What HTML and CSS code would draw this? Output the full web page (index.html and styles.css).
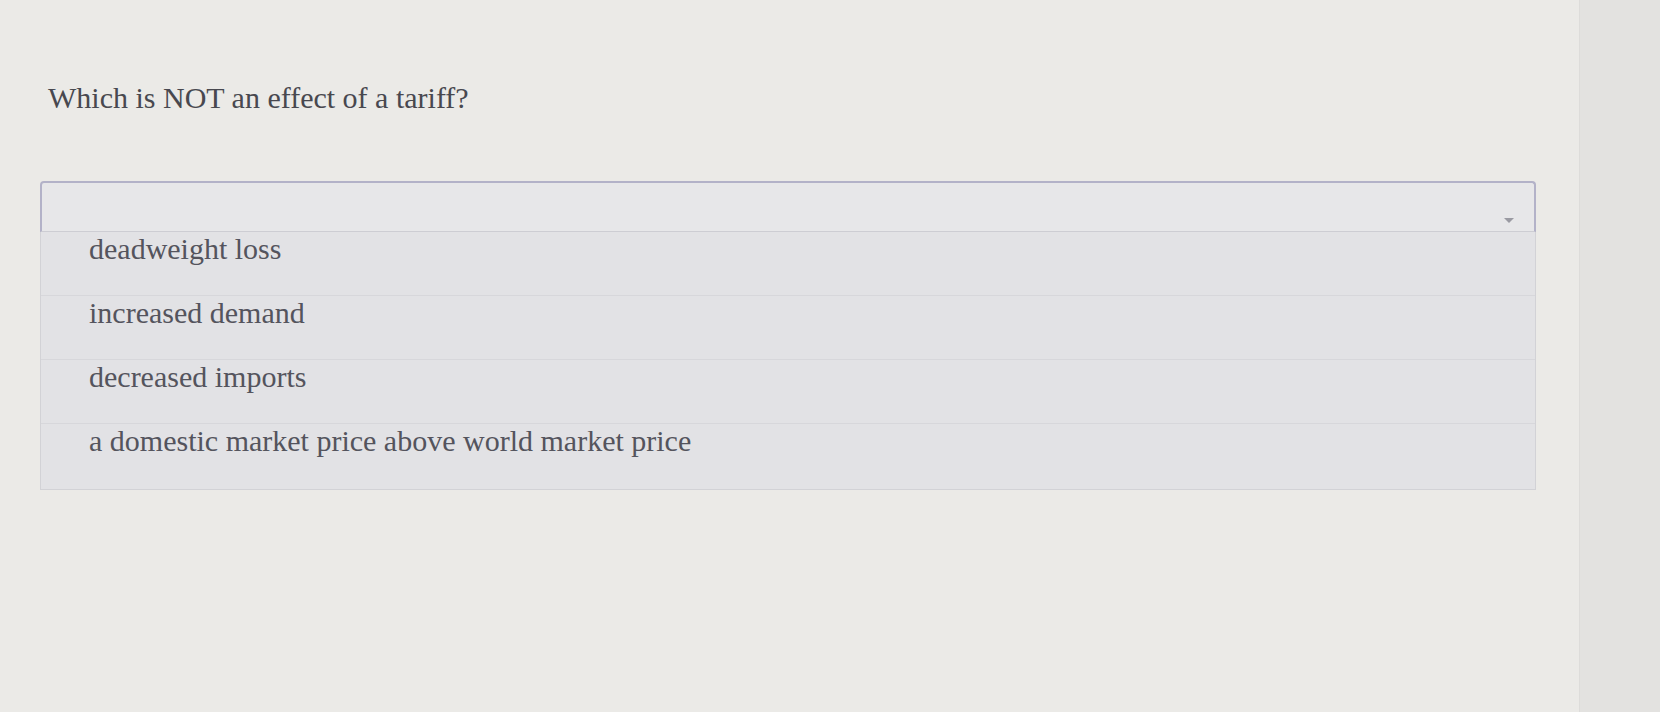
FILE: index.html
```html
<!DOCTYPE html>
<html>
<head>
<title>Quiz question</title>
<link rel="stylesheet" href="styles.css">
</head>
<body>
<div class="page">
  <div class="main">
    <p class="question">Which is NOT an effect of a tariff?</p>

    <div class="dropdown">
      <div class="selectBox">
        <span class="caret"></span>
      </div>
      <ul class="optionList">
        <li class="option">deadweight loss</li>
        <li class="option">increased demand</li>
        <li class="option">decreased imports</li>
        <li class="option">a domestic market price above world market price</li>
      </ul>
    </div>
  </div>
  <div class="sidePanel"></div>
</div>
</body>
</html>
```

FILE: styles.css
```css
html, body { margin:0px; padding:0px; height:100%; }
body { font-family:"Liberation Serif","Times New Roman",serif; background:#ebeae7; color:#505058; }

.page { display:flex; height:100%; }
.main { flex:1; padding:80px 0px 0px 40px; }
.sidePanel { width:80px; background:#e3e2e0; border-left:1px solid #dddcda; }

.question { margin:0px; font-size:30px; line-height:36px; color:#48484f; padding-left:8px; }

.dropdown { width:1496px; margin-top:65px; }
.selectBox { height:51px; box-sizing:border-box; background:#e7e7e9; border:2px solid #b3b2c8; border-bottom:1px solid #cdcdd3; border-radius:4px 4px 0px 0px; display:flex; align-items:flex-end; justify-content:flex-end; padding:0px 20px 8px 0px; }
.caret { width:0px; height:0px; border-left:5px solid transparent; border-right:5px solid transparent; border-top:5px solid #9a9aa2; }

.optionList { list-style:none; margin:0px; padding:0px; background:#e2e2e5; border:1px solid #d2d2d6; border-top:none; }
.option { height:64px; box-sizing:border-box; padding:2px 0px 0px 48px; font-size:30px; line-height:30px; color:#54545d; border-bottom:1px solid #d7d7db; }
.option:last-child { border-bottom:none; height:65px; }
```
